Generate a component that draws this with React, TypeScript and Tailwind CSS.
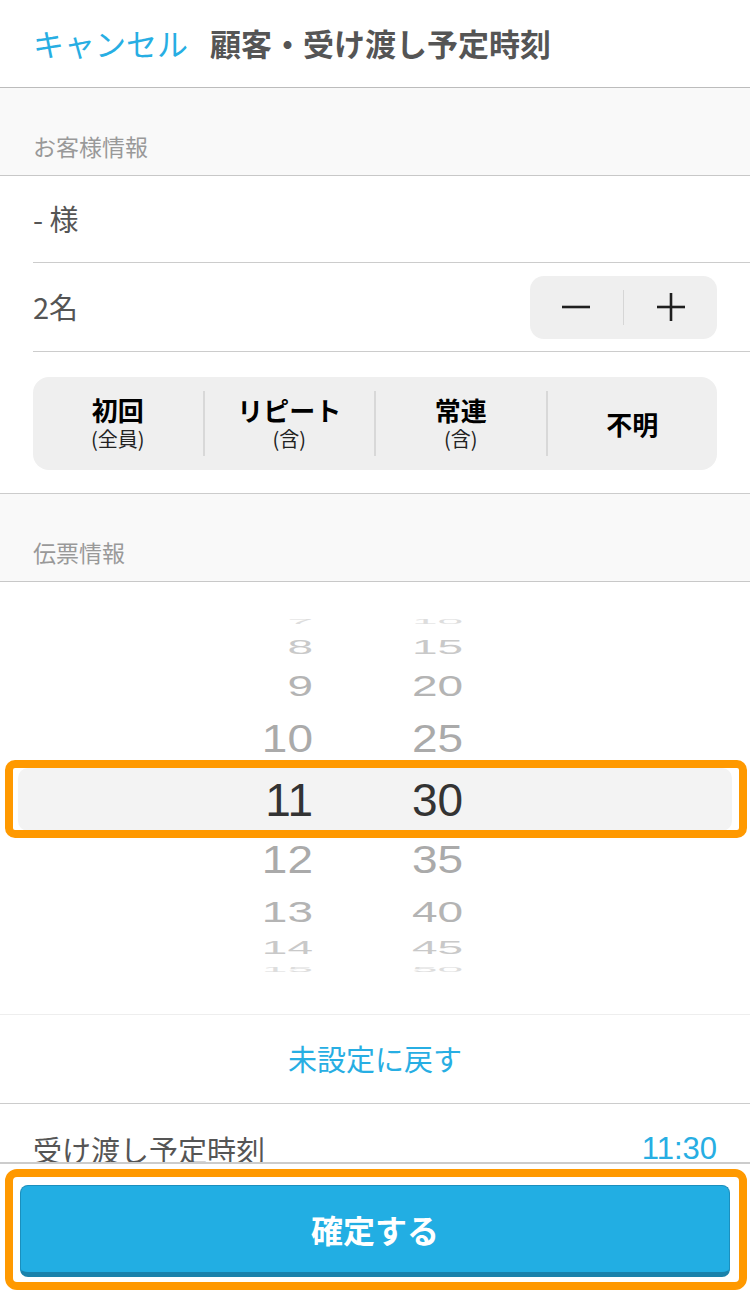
import React from "react";

const jp = { fontFamily: '"Noto Sans CJK JP", "Noto Sans", sans-serif' };
const num = { fontFamily: '"Liberation Sans", Arial, sans-serif' };

type WheelRow = {
  hour: string;
  minute: string;
  h: number;
  scale: number;
  color: string;
  selected?: boolean;
};

const wheel: WheelRow[] = [
  { hour: "7", minute: "10", h: 18, scale: 0.14, color: "#dddddd" },
  { hour: "8", minute: "15", h: 31, scale: 0.44, color: "#c9c9c9" },
  { hour: "9", minute: "20", h: 48, scale: 0.65, color: "#b4b4b4" },
  { hour: "10", minute: "25", h: 58, scale: 0.83, color: "#aaaaaa" },
  { hour: "11", minute: "30", h: 63, scale: 1, color: "#333333", selected: true },
  { hour: "12", minute: "35", h: 57, scale: 0.84, color: "#aaaaaa" },
  { hour: "13", minute: "40", h: 46, scale: 0.66, color: "#b4b4b4" },
  { hour: "14", minute: "45", h: 27, scale: 0.4, color: "#c9c9c9" },
  { hour: "15", minute: "50", h: 17, scale: 0.14, color: "#dddddd" },
];

const segments = [
  { label: "初回", sub: "(全員)" },
  { label: "リピート", sub: "(含)" },
  { label: "常連", sub: "(含)" },
  { label: "不明", sub: "" },
];

function SectionHeader({ title }: { title: string }) {
  return (
    <div className="h-[88px] bg-[#f9f9f9] flex items-end px-[33px] pb-[14px] border-b border-[#c8c8c8]">
      <span className="text-[23px] leading-[30px] text-[#999999]">{title}</span>
    </div>
  );
}

export default function App() {
  return (
    <div className="w-[750px] h-[1294px] bg-white flex flex-col overflow-hidden" style={jp}>
      {/* header */}
      <div className="h-[88px] shrink-0 flex items-center px-[33px] gap-[22px] border-b border-[#bcbcbc]">
        <span className="text-[31px] text-[#27aee3]">キャンセル</span>
        <span className="text-[31px] font-bold text-[#555555]">顧客・受け渡し予定時刻</span>
      </div>

      <SectionHeader title="お客様情報" />

      <div className="pl-[33px]">
        <div className="h-[87px] flex items-center border-b border-[#cccccc]">
          <span className="text-[29px] text-[#555555]">- 様</span>
        </div>
        <div className="h-[89px] flex items-center justify-between pr-[33px] border-b border-[#cccccc]">
          <span className="text-[29px] text-[#555555]">2名</span>
          <div className="w-[187px] h-[63px] rounded-[14px] bg-[#efefef] flex items-center">
            <div className="flex-1 flex items-center justify-center">
              <svg width="30" height="30" viewBox="0 0 30 30">
                <line x1="1" y1="15" x2="29" y2="15" stroke="#1f1f1f" strokeWidth="2.6" />
              </svg>
            </div>
            <div className="w-[1.5px] h-[35px] bg-[#d6d6d6]" />
            <div className="flex-1 flex items-center justify-center">
              <svg width="30" height="30" viewBox="0 0 30 30">
                <line x1="1" y1="15" x2="29" y2="15" stroke="#1f1f1f" strokeWidth="2.6" />
                <line x1="15" y1="1" x2="15" y2="29" stroke="#1f1f1f" strokeWidth="2.6" />
              </svg>
            </div>
          </div>
        </div>
      </div>

      <div className="pt-[25px] pb-[23px] px-[33px] border-b border-[#cccccc]">
        <div className="h-[93px] rounded-[16px] bg-[#efefef] flex items-center">
          {segments.map((s, i) => (
            <React.Fragment key={s.label}>
              {i > 0 && <div className="w-[2px] h-[65px] bg-[#d8d8d8]" />}
              <div className="flex-1 flex flex-col items-center justify-center">
                <span className="text-[26px] leading-[30px] font-bold text-black">{s.label}</span>
                {s.sub && <span className="text-[20px] leading-[28px] text-[#222222]">{s.sub}</span>}
              </div>
            </React.Fragment>
          ))}
        </div>
      </div>

      <SectionHeader title="伝票情報" />

      {/* time picker */}
      <div className="h-[433px] shrink-0 pt-[31px] border-b border-[#eeeeee] relative">
        <div className="h-[365px] overflow-hidden flex flex-col" style={num}>
          {wheel.map((r) => (
            <div
              key={r.hour}
              className={
                r.selected
                  ? "flex items-center mx-[18px] bg-[#f3f3f3] rounded-[10px]"
                  : "flex items-center pl-[18px]"
              }
              style={{ height: r.h }}
            >
              <div className="w-[295px] flex justify-end">
                <span
                  className="text-[46px] leading-none"
                  style={{ color: r.color, transform: `scaleY(${r.scale})` }}
                >
                  {r.hour}
                </span>
              </div>
              <div className="pl-[99px]">
                <span
                  className="block text-[46px] leading-none"
                  style={{ color: r.color, transform: `scaleY(${r.scale})` }}
                >
                  {r.minute}
                </span>
              </div>
            </div>
          ))}
        </div>
        {/* highlight annotation */}
        <div className="absolute left-[5px] right-[3px] top-[178px] h-[78px] border-[8px] border-[#ff9900] rounded-[10px]" />
      </div>

      <div className="h-[89px] shrink-0 flex items-center justify-center border-b border-[#cccccc]">
        <span className="text-[29px] text-[#27aee3]">未設定に戻す</span>
      </div>

      <div className="h-[58px] shrink-0 overflow-hidden flex items-start justify-between px-[33px] pt-[26px]">
        <span className="text-[29px] leading-[38px] text-[#555555]">受け渡し予定時刻</span>
        <span className="text-[31px] leading-[38px] text-[#27aee3]" style={num}>11:30</span>
      </div>

      {/* footer */}
      <div className="flex-1 relative border-t-2 border-[#cccccc] bg-white pt-[21px] px-[20px] pb-[17px]">
        <button className="w-full h-[92px] rounded-[8px] bg-[#22aee3] border border-[#1b8fbd] border-b-[5px] border-b-[#1a82ab] flex items-center justify-center">
          <span className="text-[32px] font-bold text-white">確定する</span>
        </button>
        <div className="absolute left-[5px] right-[3px] top-[5px] bottom-[4px] border-[8px] border-[#ff9900] rounded-[12px]" />
      </div>
    </div>
  );
}
